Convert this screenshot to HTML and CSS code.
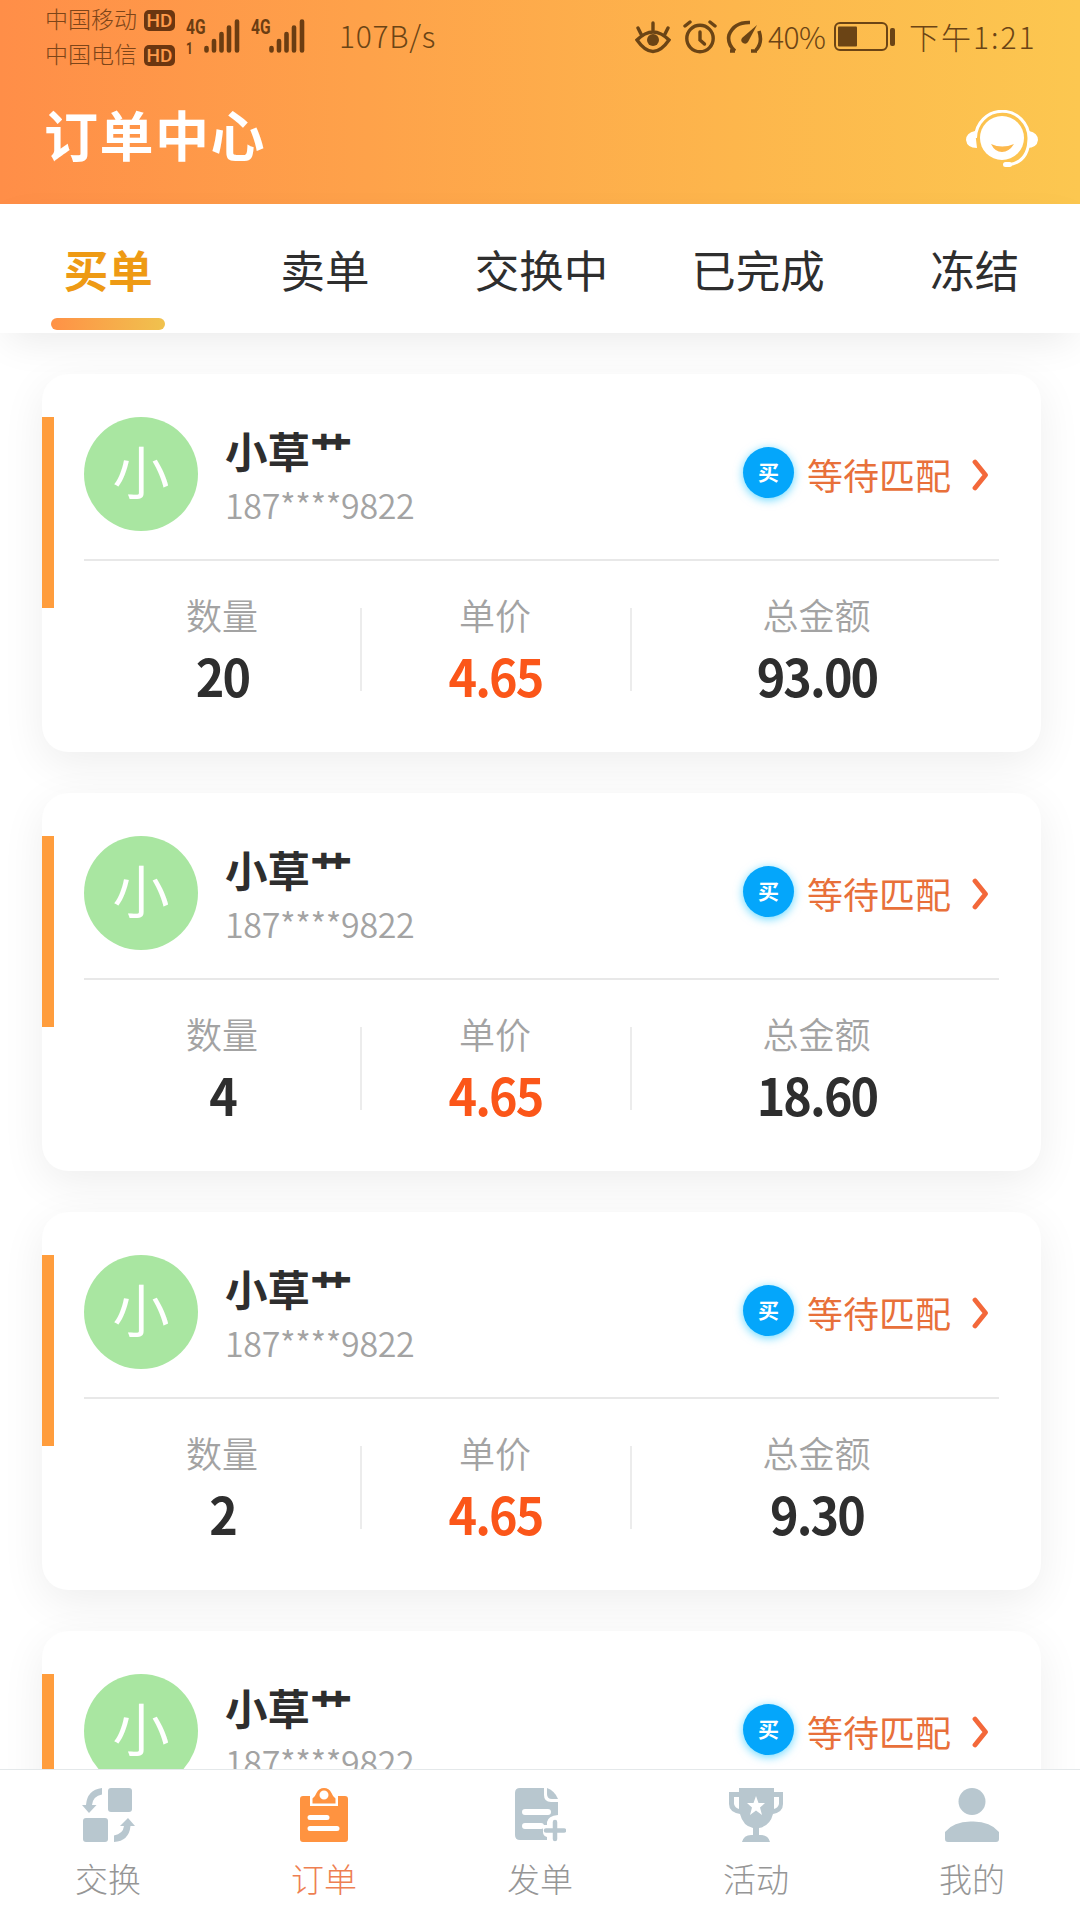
FILE: index.html
```html
<!DOCTYPE html>
<html lang="zh-CN">
<head>
<meta charset="utf-8">
<title>订单中心</title>
<link rel="stylesheet" href="styles.css">
</head>
<body>
<div class="app">
  <header class="header">
    <div class="status">
      <div class="carriers">
        <div class="carrier"><span class="carrier-name">中国移动</span><span class="hd">HD</span></div>
        <div class="carrier"><span class="carrier-name">中国电信</span><span class="hd">HD</span></div>
      </div>
      <div class="signal">
        <div class="net"><span class="gen">4G</span><span class="gen gen-sub">1</span></div>
        <svg class="bars" width="36" height="34" viewBox="0 0 36 34"><use href="#i-bars"/></svg>
      </div>
      <div class="signal">
        <div class="net net-second"><span class="gen">4G</span></div>
        <svg class="bars" width="36" height="34" viewBox="0 0 36 34"><use href="#i-bars"/></svg>
      </div>
      <span class="speed">107B/s</span>
      <div class="status-right">
        <svg width="36" height="34" viewBox="0 0 36 34" fill="none" stroke="#6b4415" stroke-width="3.4" stroke-linecap="round"><path d="M2 20Q18 4 34 20Q18 43 2 20ZM18 10V3M6 14L3 8M30 14L33 8"/><circle cx="18" cy="20" r="6" fill="#6b4415" stroke="none"/></svg>
        <svg class="i-alarm" width="34" height="34" viewBox="0 0 34 34" fill="none" stroke="#6b4415" stroke-width="3.4" stroke-linecap="round"><circle cx="17" cy="18.500" r="13.200"/><path d="M17 12V20L21.500 24"/><path d="M2 6L7 2M32 6L27 2"/></svg>
        <svg class="i-gauge" width="38" height="34" viewBox="0 0 38 34" fill="none" stroke="#6b4415" stroke-width="3.600"><path d="M9 31L4 31M9 31Q1 24 3 15Q8 2 24 2.500M33 11Q37 23 30 30M25 31H31"/><path d="M31 5L22 22A3.500 3.500 0 1 1 16 18Z" fill="#6b4415" stroke="none"/></svg>
        <span class="percent">40%</span>
        <svg class="i-battery" width="62" height="30" viewBox="0 0 62 30"><rect x="1" y="1" width="52" height="27" rx="5" fill="none" stroke="#6b4415" stroke-width="2"/><rect x="4" y="4.500" width="19" height="20" rx="1" fill="#6b4415"/><rect x="56" y="6" width="5" height="18" rx="2" fill="#6b4415"/></svg>
        <span class="clock">下午1:21</span>
      </div>
    </div>
    <div class="titlebar">
      <h1 class="title">订单中心</h1>
      <svg class="service" width="72" height="58" viewBox="0 0 72 58"><path d="M9 21Q0 23 0 30Q1 38 11 38ZM63 21Q72 23 72 30Q71 38 61 38Z" fill="#fff"/><path d="M9.500 28A26.500 26.500 0 0 1 63 28Q63 52 42 55" fill="none" stroke="#fff" stroke-width="3"/><rect x="37" y="52" width="9" height="5" rx="2.500" fill="#fff"/><circle cx="36" cy="28" r="22" fill="#fff"/><path d="M25 34Q36 39 48 34Q43 42 36 42Q29 42 25 34Z" fill="#fdb94d"/></svg>
    </div>
  </header>

  <nav class="tabs">
    <div class="tab tab-on">买单</div>
    <div class="tab">卖单</div>
    <div class="tab">交换中</div>
    <div class="tab">已完成</div>
    <div class="tab">冻结</div>
  </nav>

  <main class="list">
    <article class="card">
      <div class="card-head">
        <div class="avatar">小</div>
        <div class="who"><div class="name">小草艹</div><div class="phone">187****9822</div></div>
        <div class="state"><span class="badge">买</span><span class="state-text">等待匹配</span><svg class="chev" width="18" height="32" viewBox="0 0 18 32"><use href="#i-chev"/></svg></div>
      </div>
      <div class="stats">
        <div class="stat"><div class="label">数量</div><div class="value">20</div></div>
        <div class="stat"><div class="label">单价</div><div class="value price">4.65</div></div>
        <div class="stat"><div class="label">总金额</div><div class="value">93.00</div></div>
      </div>
    </article>
    <article class="card">
      <div class="card-head">
        <div class="avatar">小</div>
        <div class="who"><div class="name">小草艹</div><div class="phone">187****9822</div></div>
        <div class="state"><span class="badge">买</span><span class="state-text">等待匹配</span><svg class="chev" width="18" height="32" viewBox="0 0 18 32"><use href="#i-chev"/></svg></div>
      </div>
      <div class="stats">
        <div class="stat"><div class="label">数量</div><div class="value">4</div></div>
        <div class="stat"><div class="label">单价</div><div class="value price">4.65</div></div>
        <div class="stat"><div class="label">总金额</div><div class="value">18.60</div></div>
      </div>
    </article>
    <article class="card">
      <div class="card-head">
        <div class="avatar">小</div>
        <div class="who"><div class="name">小草艹</div><div class="phone">187****9822</div></div>
        <div class="state"><span class="badge">买</span><span class="state-text">等待匹配</span><svg class="chev" width="18" height="32" viewBox="0 0 18 32"><use href="#i-chev"/></svg></div>
      </div>
      <div class="stats">
        <div class="stat"><div class="label">数量</div><div class="value">2</div></div>
        <div class="stat"><div class="label">单价</div><div class="value price">4.65</div></div>
        <div class="stat"><div class="label">总金额</div><div class="value">9.30</div></div>
      </div>
    </article>
    <article class="card">
      <div class="card-head">
        <div class="avatar">小</div>
        <div class="who"><div class="name">小草艹</div><div class="phone">187****9822</div></div>
        <div class="state"><span class="badge">买</span><span class="state-text">等待匹配</span><svg class="chev" width="18" height="32" viewBox="0 0 18 32"><use href="#i-chev"/></svg></div>
      </div>
    </article>
  </main>

  <nav class="dock">
    <div class="dock-item">
      <svg width="54" height="54" viewBox="0 0 54 54" fill="#b8c7cf"><rect x="27" y="0" width="24" height="24" rx="3"/><rect x="2" y="30" width="25" height="24" rx="3"/><path d="M21 0V6.500Q12 8 11 17H15.500L8 25L1 17H5Q6 2 21 0ZM33 54V47.500Q42 46 43 38H39L47 30L54 38H49.500Q48 53 33 54Z"/></svg>
      <span>交换</span>
    </div>
    <div class="dock-item dock-on">
      <svg width="48" height="54" viewBox="0 0 48 54"><path fill="#ff9340" fill-rule="evenodd" d="M3 8H10V18H38V8H45Q48 8 48 11V51Q48 54 45 54H3Q0 54 0 51V11Q0 8 3 8ZM12.500 15.500V10.500Q15 9 16.500 5Q19 0 24 0Q29 0 31.500 5Q33 9 35.500 10.500V15.500ZM28.500 7A4.500 4.500 0 1 0 19.500 7A4.500 4.500 0 1 0 28.500 7ZM10 27A2.500 2.500 0 0 0 10 32H27A2.500 2.500 0 0 0 27 27ZM10 38A2.500 2.500 0 0 0 10 43H37A2.500 2.500 0 0 0 37 38Z"/></svg>
      <span>订单</span>
    </div>
    <div class="dock-item">
      <svg width="52" height="54" viewBox="0 0 52 54"><path fill="#b8c7cf" d="M6 0H30V7Q30 14 37 14H44V27Q34 28 33 34V37H29V44Q29 48 33 49V52H6Q1 52 1 47V5Q1 0 6 0Z"/><path fill="#b8c7cf" d="M33 0Q41 3 44 11H38Q33 11 33 6Z"/><path d="M11 24H34M11 38H27" stroke="#fff" stroke-width="6" stroke-linecap="round"/><path d="M41 34V51M32 42.500H50" stroke="#b8c7cf" stroke-width="4.500" stroke-linecap="round"/></svg>
      <span>发单</span>
    </div>
    <div class="dock-item">
      <svg width="54" height="54" viewBox="0 0 54 54"><path fill="#b8c7cf" fill-rule="evenodd" d="M10 0H45V4H54V16Q54 24 44 26Q41 38 30 40V47Q39 46 41 54H13Q15 46 24 47V40Q14 38 11 26Q0 24 0 16V4H10ZM5 9V16Q6 20 10 21V9ZM50 9H45V21Q49 20 50 16ZM27 8L24.500 15H18L23 19.500L21 27L27 22.500L33 27L31 19.500L36 15H29.500Z"/></svg>
      <span>活动</span>
    </div>
    <div class="dock-item">
      <svg width="54" height="54" viewBox="0 0 54 54" fill="#b8c7cf"><circle cx="27" cy="13.500" r="13.500"/><path d="M0 44Q9 33 27 33.500Q45 33 54 44V51Q54 54 51 54H3Q0 54 0 51Z"/></svg>
      <span>我的</span>
    </div>
  </nav>
</div>
<svg class="defs" width="0" height="0">
  <symbol id="i-bars" viewBox="0 0 36 34"><path d="M2.500 29V31.500M10 22V31.500M17.500 15V31.500M25 8.500V31.500M33 2.500V31.500" stroke="#6b3d12" stroke-width="4.600" stroke-linecap="round"/></symbol>
  <symbol id="i-chev" viewBox="0 0 18 32"><path d="M3 3L13.500 16L3 29" fill="none" stroke="#f3683a" stroke-width="4.800" stroke-linecap="round" stroke-linejoin="round"/></symbol>
</svg>
</body>
</html>
```
FILE: styles.css
```css
* { box-sizing: border-box; }
body { margin: 0; background: #fff; font-family: "Noto Sans CJK SC", sans-serif; color: #2e2e2e; }
.app { display: flex; flex-direction: column; width: 1080px; height: 1920px; overflow: hidden; }
.defs { position: absolute; }
svg { display: block; flex: none; }

.header { flex: none; height: 204px; background: linear-gradient(90deg, #ff8e48, #fdb64c 68%, #fcc750); }
.status { display: flex; height: 74px; padding-left: 45px; color: #6b4415; white-space: nowrap; }
.carriers { display: flex; flex-direction: column; gap: 13px; width: 130px; padding-top: 9px; color: #7d4519; }
.carrier { display: flex; justify-content: space-between; align-items: center; height: 22px; }
.carrier-name { font-size: 23px; line-height: 20px; height: 24px; font-weight: 300; }
.hd { width: 31px; height: 21px; border-radius: 5px; background: #6b3610; color: #ff9b4b; font: 500 19px/21px Roboto, sans-serif; text-align: center; }
.signal { display: flex; padding-top: 19px; margin-left: 11px; }
.net { display: flex; flex-direction: column; width: 18px; }
.gen { font: 700 21px/16px "Roboto", sans-serif; color: #6b3d12; transform: scaleX(.74); transform-origin: 0 0; }
.gen-sub { margin-top: 6px; font-size: 16px; }
.speed { width: 98px; margin-left: 34px; font-size: 30px; line-height: 71px; font-weight: 300; letter-spacing: .7px; }
.status-right { display: flex; flex: 1; padding-top: 20px; margin-left: 198px; }
.i-alarm { margin-left: 12px; }
.i-gauge { margin-left: 9px; }
.percent { width: 66px; margin-left: 4px; font-size: 30px; line-height: 32px; font-weight: 300; letter-spacing: -.5px; }
.i-battery { margin-top: 2px; }
.clock { margin-left: 13px; font-size: 30px; line-height: 32px; font-weight: 300; letter-spacing: 2px; }
.titlebar { display: flex; justify-content: space-between; padding: 36px 42px 0 44px; }
.title { margin: -12px 0 0; font-size: 54px; line-height: 72px; font-weight: 700; letter-spacing: 1.5px; color: #fff; }

.tabs { position: relative; z-index: 1; display: grid; grid-template-columns: repeat(5, 216.6px); flex: none; height: 129px; background: #fff; box-shadow: 0 14px 40px -8px rgba(0, 0, 0, .09); }
.tab { display: flex; flex-direction: column; align-items: center; padding-top: 32px; font-size: 44.5px; line-height: 66px; }
.tab-on { font-weight: 700; color: #ee9a14; }
.tab-on::after { content: ""; width: 114px; height: 12px; margin-top: 16px; border-radius: 6px; background: linear-gradient(90deg, #ff9146, #f0c24e); }

.list { display: flex; flex-direction: column; flex: 1; gap: 41px; min-height: 0; overflow: hidden; padding: 41px 39px 0 42px; }
.card { flex: none; height: 378px; padding: 43px 42px 0 0; border-radius: 26px; background: linear-gradient(#ff9d3d, #ff9d3d) 0 43px / 12px 191px no-repeat #fff; box-shadow: 0 12px 44px rgba(0, 0, 0, .07); }
.card-head { display: flex; height: 144px; margin-left: 42px; border-bottom: 2px solid #e8e8e8; }
.avatar { width: 114px; height: 114px; border-radius: 50%; background: #a9e6a1; color: #fff; font-size: 57px; line-height: 105px; text-align: center; }
.who { margin-left: 27px; }
.name { font-size: 42.5px; line-height: 66px; font-weight: 700; }
.phone { font-size: 34px; line-height: 44px; font-weight: 350; color: #a3a3a3; letter-spacing: -.35px; }
.state { display: flex; margin-left: auto; padding: 30px 9px 0 0; color: #e8703a; }
.badge { width: 51px; height: 51px; border-radius: 50%; background: #04a6fb; box-shadow: 0 2px 10px rgba(0, 190, 255, .6); color: #fff; font-size: 21px; line-height: 49px; font-weight: 700; text-align: center; }
.state-text { margin: 0 21px 0 13px; font-size: 36px; line-height: 54px; }
.chev { margin-top: 12px; }
.stats { display: grid; grid-template-columns: 276px 270px 1fr; margin-left: 42px; }
.stat { position: relative; padding-top: 27px; text-align: center; }
.stat:last-child { padding-left: 4px; }
.stat + .stat::before { content: ""; position: absolute; left: 0; top: 47px; width: 2px; height: 83px; background: #ececec; }
.label { font-size: 36px; line-height: 52px; font-weight: 350; color: #a3a3a3; }
.value { margin-top: 0; padding-left: 1px; font-size: 51px; line-height: 70px; font-weight: 700; letter-spacing: -2px; transform: scaleX(.95); }
.price { color: #fb5619; }

.dock { position: relative; z-index: 2; display: grid; grid-template-columns: repeat(5, 1fr); flex: none; height: 151px; border-top: 1px solid #e4e8ea; background: #fff; }
.dock-item { display: flex; flex-direction: column; align-items: center; padding-top: 18px; gap: 11px; font-size: 33px; line-height: 50px; font-weight: 300; color: #969696; }
.dock-on { color: #ee7f52; }
```
